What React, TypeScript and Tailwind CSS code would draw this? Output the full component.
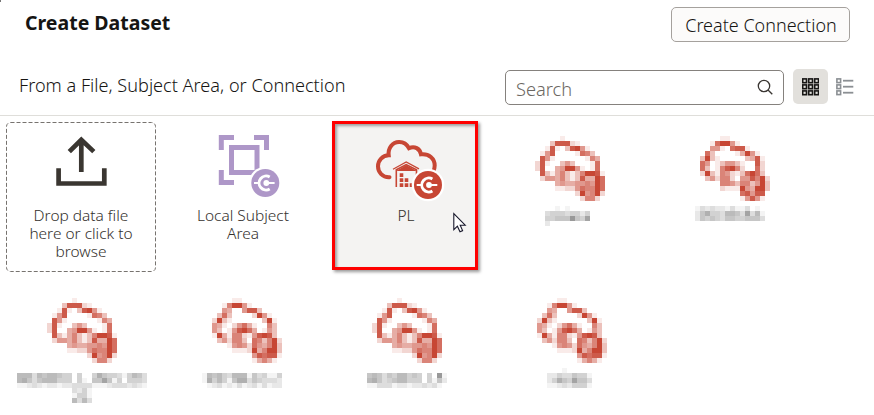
import React from "react";

type Mosaic = { icon: string[]; iconX: number; label: string[]; labelX: number; labelY: number };

const iconA = [
  ".....1........",
  "...388821.....",
  "..181038951...",
  ".15800001763..",
  ".8510000001640",
  "28100353000170",
  "28004599510170",
  ".8314631369981",
  ".2554631384497",
  "....4544556597",
  "....1122576697",
  "........295692",
  ".........2662.",
];

const iconB = [
  "....11........",
  "..179951......",
  "..55107881....",
  ".73000014951..",
  "39310000034810",
  "75013553100820",
  "73016896200720",
  "29316521379730",
  ".3526620558692",
  "....6653663593",
  "....2111954993",
  "........785880",
  "........158510",
];

const iconC = [
  "....11........",
  "..169951......",
  "..54005883....",
  ".37300002951..",
  "29310000003910",
  "54102574100630",
  "53015897401530",
  "19416621589830",
  ".3526630763692",
  "...15652754693",
  "....1112946993",
  "........587881",
  "........146410",
];

const mosaics: Mosaic[] = [
  { icon: iconA, iconX: 42, labelX: 52, labelY: 84, label: ["..1.1....", "344434424", "445559548", "2........"] },
  { icon: iconB, iconX: 44, labelX: 39, labelY: 84, label: ["13232213113010", "25744366538361", "25454355445553"] },
  {
    icon: iconA, iconX: 41, labelX: 11, labelY: 89,
    label: [
      "66636566544040047544314653",
      "67535666444041055851404443",
      "11232122122333311123332321",
      "...........3241...........",
      "...........1441...........",
      "...........6363...........",
    ],
  },
  { icon: iconC, iconX: 44, labelX: 34, labelY: 89, label: ["1656436661534114", "1746415773543332", "0123121312313122"] },
  { icon: iconA, iconX: 41, labelX: 36, labelY: 89, label: ["5653546645404091", "6753456644404152", "113331221223231."] },
  { icon: iconC, iconX: 44, labelX: 54, labelY: 84, label: ["...1.....", "224335441", "247548553", "112324441"] },
];

function Cells({ rows, x, y, fill }: { rows: string[]; x: number; y: number; fill: string }) {
  return (
    <>
      {rows.flatMap((row, r) =>
        row.split("").map((c, i) =>
          Number(c) > 0 ? (
            <rect key={`${r}-${i}`} x={x + i * 5} y={y + r * 5} width={5} height={5} fill={fill} opacity={Number(c) / 9} />
          ) : null
        )
      )}
    </>
  );
}

function MosaicTile({ m }: { m: Mosaic }) {
  return (
    <svg width="150" height="131" shapeRendering="crispEdges">
      <Cells rows={m.icon} x={m.iconX} y={14} fill="#c74634" />
      <Cells rows={m.label} x={m.labelX} y={m.labelY} fill="#999999" />
    </svg>
  );
}

function Badge({ x, y, color, ring }: { x: number; y: number; color: string; ring: string }) {
  return (
    <g transform={`translate(${x} ${y})`} fill="none" stroke="#fff">
      <circle r="16.3" fill={ring} stroke="none" />
      <circle r="14" fill={color} stroke="none" />
      <path d="M4.4 -6A7 7 0 1 0 4.4 6" strokeWidth="2.9" />
      <path d="M-11.3 0H-6M1 0H9.3" strokeWidth="1.9" />
      <circle cx="1" r="2.9" fill="#fff" stroke="none" />
    </g>
  );
}

function UploadIcon() {
  return (
    <svg width="150" height="80" viewBox="6 122 150 80" fill="none" stroke="#3a3631" strokeWidth="4.7">
      <path d="M81.3 172V140M69.3 151.6L81.3 139.8L93.8 151.6" />
      <path d="M58.6 168.3V183.5H104.3V168.3" />
    </svg>
  );
}

function SubjectIcon() {
  return (
    <svg width="150" height="80" viewBox="168 122 150 80" fill="none" stroke="#ae97c8" strokeWidth="5">
      <path d="M221.3 150V137.5H234M254 137.5H266.5V150M221.3 170V182.5H234" />
      <rect x="231.5" y="147.5" width="25.5" height="25" />
      <Badge x={265.3} y={183} color="#ae97c8" ring="#fff" />
    </svg>
  );
}

function CloudIcon() {
  return (
    <svg width="150" height="80" viewBox="331 122 150 80" fill="none">
      <path
        d="M389.5 177.2C382.5 177.5 378 172.3 378 166.3C378 160.3 382.6 155.6 388.7 155.3C387.8 148 392.5 142.2 399 142C403.7 141.9 407 144.4 409 148.2C414.5 145.6 420 148.6 421 154.3C429 153.3 434.7 158.7 434.7 165.5C434.7 168 434.2 169.8 433.2 171.5"
        stroke="#c74634"
        strokeWidth="4"
        strokeLinecap="round"
      />
      <path d="M393 169.2L406.2 162L419 168.9" stroke="#c74634" strokeWidth="1.3" />
      <path d="M396.3 187V169.8L406.2 164.6L416.5 169.8V187" stroke="#c74634" strokeWidth="1.6" />
      <path d="M396 171L406.2 165L417 171Z" fill="#c74634" />
      <path d="M399.7 173.2h3.6v3.7h-3.6zM399.7 178.2h3.6v3.7h-3.6zM399.7 183.2h3.6v3.7h-3.6zM404.7 178.2h3.6v3.7h-3.6zM404.7 183.2h3.6v3.7h-3.6zM409.7 183.2h3.6v3.7h-3.6z" fill="#c74634" />
      <Badge x={428} y={185} color="#c74634" ring="#fff" />
    </svg>
  );
}

function Caption({ lines }: { lines: string[] }) {
  return (
    <div className="mt-[4px] flex scale-x-[1.03] flex-col items-center whitespace-nowrap text-[15px] leading-[18px] text-[#33302d]">
      {lines.map((line) => (
        <span key={line}>{line}</span>
      ))}
    </div>
  );
}

export default function App() {
  return (
    <div className="relative h-[415px] w-[874px] overflow-hidden bg-white font-['Noto_Sans','Open_Sans',sans-serif] font-light text-[#333]">
      <header className="flex h-[49px] items-start justify-between pl-[25px] pr-[24px]">
        <h1 className="mt-[9px] origin-left scale-x-[0.975] whitespace-nowrap text-[20px] font-bold leading-[27px] text-[#161513]">Create Dataset</h1>
        <button className="mt-[7px] flex h-[35px] w-[179px] items-center justify-center whitespace-nowrap rounded-[5px] border border-[#a5a19d] bg-[#fcfbfa] text-[18.5px] font-light text-[#161513]">
          <span className="scale-x-[0.972]">Create Connection</span>
        </button>
      </header>
      <div className="flex h-[67px] items-start border-b border-[#dfdeda] pl-[19px] pt-[21px]">
        <div className="mt-px w-[486px]">
          <div className="w-max origin-left scale-x-[0.979] whitespace-nowrap text-[18.5px] leading-[27px] text-[#161513]">
            From a File, Subject Area, or Connection
          </div>
        </div>
        <div className="flex h-[35px] w-[279px] items-center justify-between rounded-[5px] border border-[#85817d] pl-[10px] pr-[9px]">
          <span className="mt-[2px] origin-left scale-x-[0.985] text-[18.5px] text-[#6b6762]">Search</span>
          <svg className="-mt-[2px]" width="18" height="18" fill="none" stroke="#3a3632" strokeWidth="1.3">
            <circle cx="8" cy="8" r="5.7" />
            <path d="M12 12L16.3 16.2" />
          </svg>
        </div>
        <div className="-mt-px ml-[9px] flex h-[35px] w-[35px] items-center justify-center rounded-[5px] bg-[#e2e0dc]">
          <svg width="17" height="18" viewBox="0 0 17 18" fill="none" stroke="#171614" strokeWidth="1.6">
            {[0.9, 6.9, 12.9].flatMap((y) => [0.7, 6.7, 12.7].map((x) => <rect key={`${x}-${y}`} x={x} y={y} width="3.8" height="3.8" />))}
          </svg>
        </div>
        <svg className="ml-[8px] mt-[8px]" width="18" height="18" fill="none" stroke="#8b8f93" strokeWidth="1.6">
          {[0.9, 6.9, 12.9].map((y) => (
            <g key={y}>
              <rect x="0.9" y={y} width="3.7" height="3.7" />
              <path d={`M7 ${y + 1.8}H17.3`} strokeWidth="1.8" />
            </g>
          ))}
        </svg>
      </div>
      <main className="ml-[6px] mt-[6px] grid grid-cols-[162px_163px_162px_163px_162px] gap-y-[12px]">
        <div className="relative h-[150px] w-[150px]">
          <svg className="absolute inset-0" width="150" height="150" fill="none" stroke="#77736f">
            <rect x="0.5" y="0.5" width="149" height="149" rx="4" strokeDasharray="4 2" />
          </svg>
          <UploadIcon />
          <Caption lines={["Drop data file", "here or click to", "browse"]} />
        </div>
        <div className="h-[150px] w-[150px]">
          <SubjectIcon />
          <Caption lines={["Local Subject", "Area"]} />
        </div>
        <div className="relative h-[150px] w-[150px]">
          <div className="absolute -top-px left-px h-[149px] w-[146px] border-[3px] border-[#fe0000] bg-[#f4f3f2] shadow-[2px_2px_3px_rgba(0,0,0,0.4),inset_2px_2px_3px_rgba(0,0,0,0.35)]" />
          <div className="relative">
            <CloudIcon />
            <Caption lines={["PL"]} />
          </div>
          <svg className="absolute left-[122px] top-[90px]" width="15" height="22" fill="#fff" stroke="#17172b" strokeWidth="1.1">
            <path d="M0.8 1.7V17.6L4.4 14.2L7 19.7L9.6 18.6L7.2 13.2H12.2Z" />
          </svg>
        </div>
        {mosaics.map((m, i) => (
          <div key={i} className="h-[150px] w-[150px] overflow-visible">
            <MosaicTile m={m} />
          </div>
        ))}
      </main>
      <div className="absolute -left-px -top-px h-[3px] w-[2px] bg-[#777]" />
    </div>
  );
}
